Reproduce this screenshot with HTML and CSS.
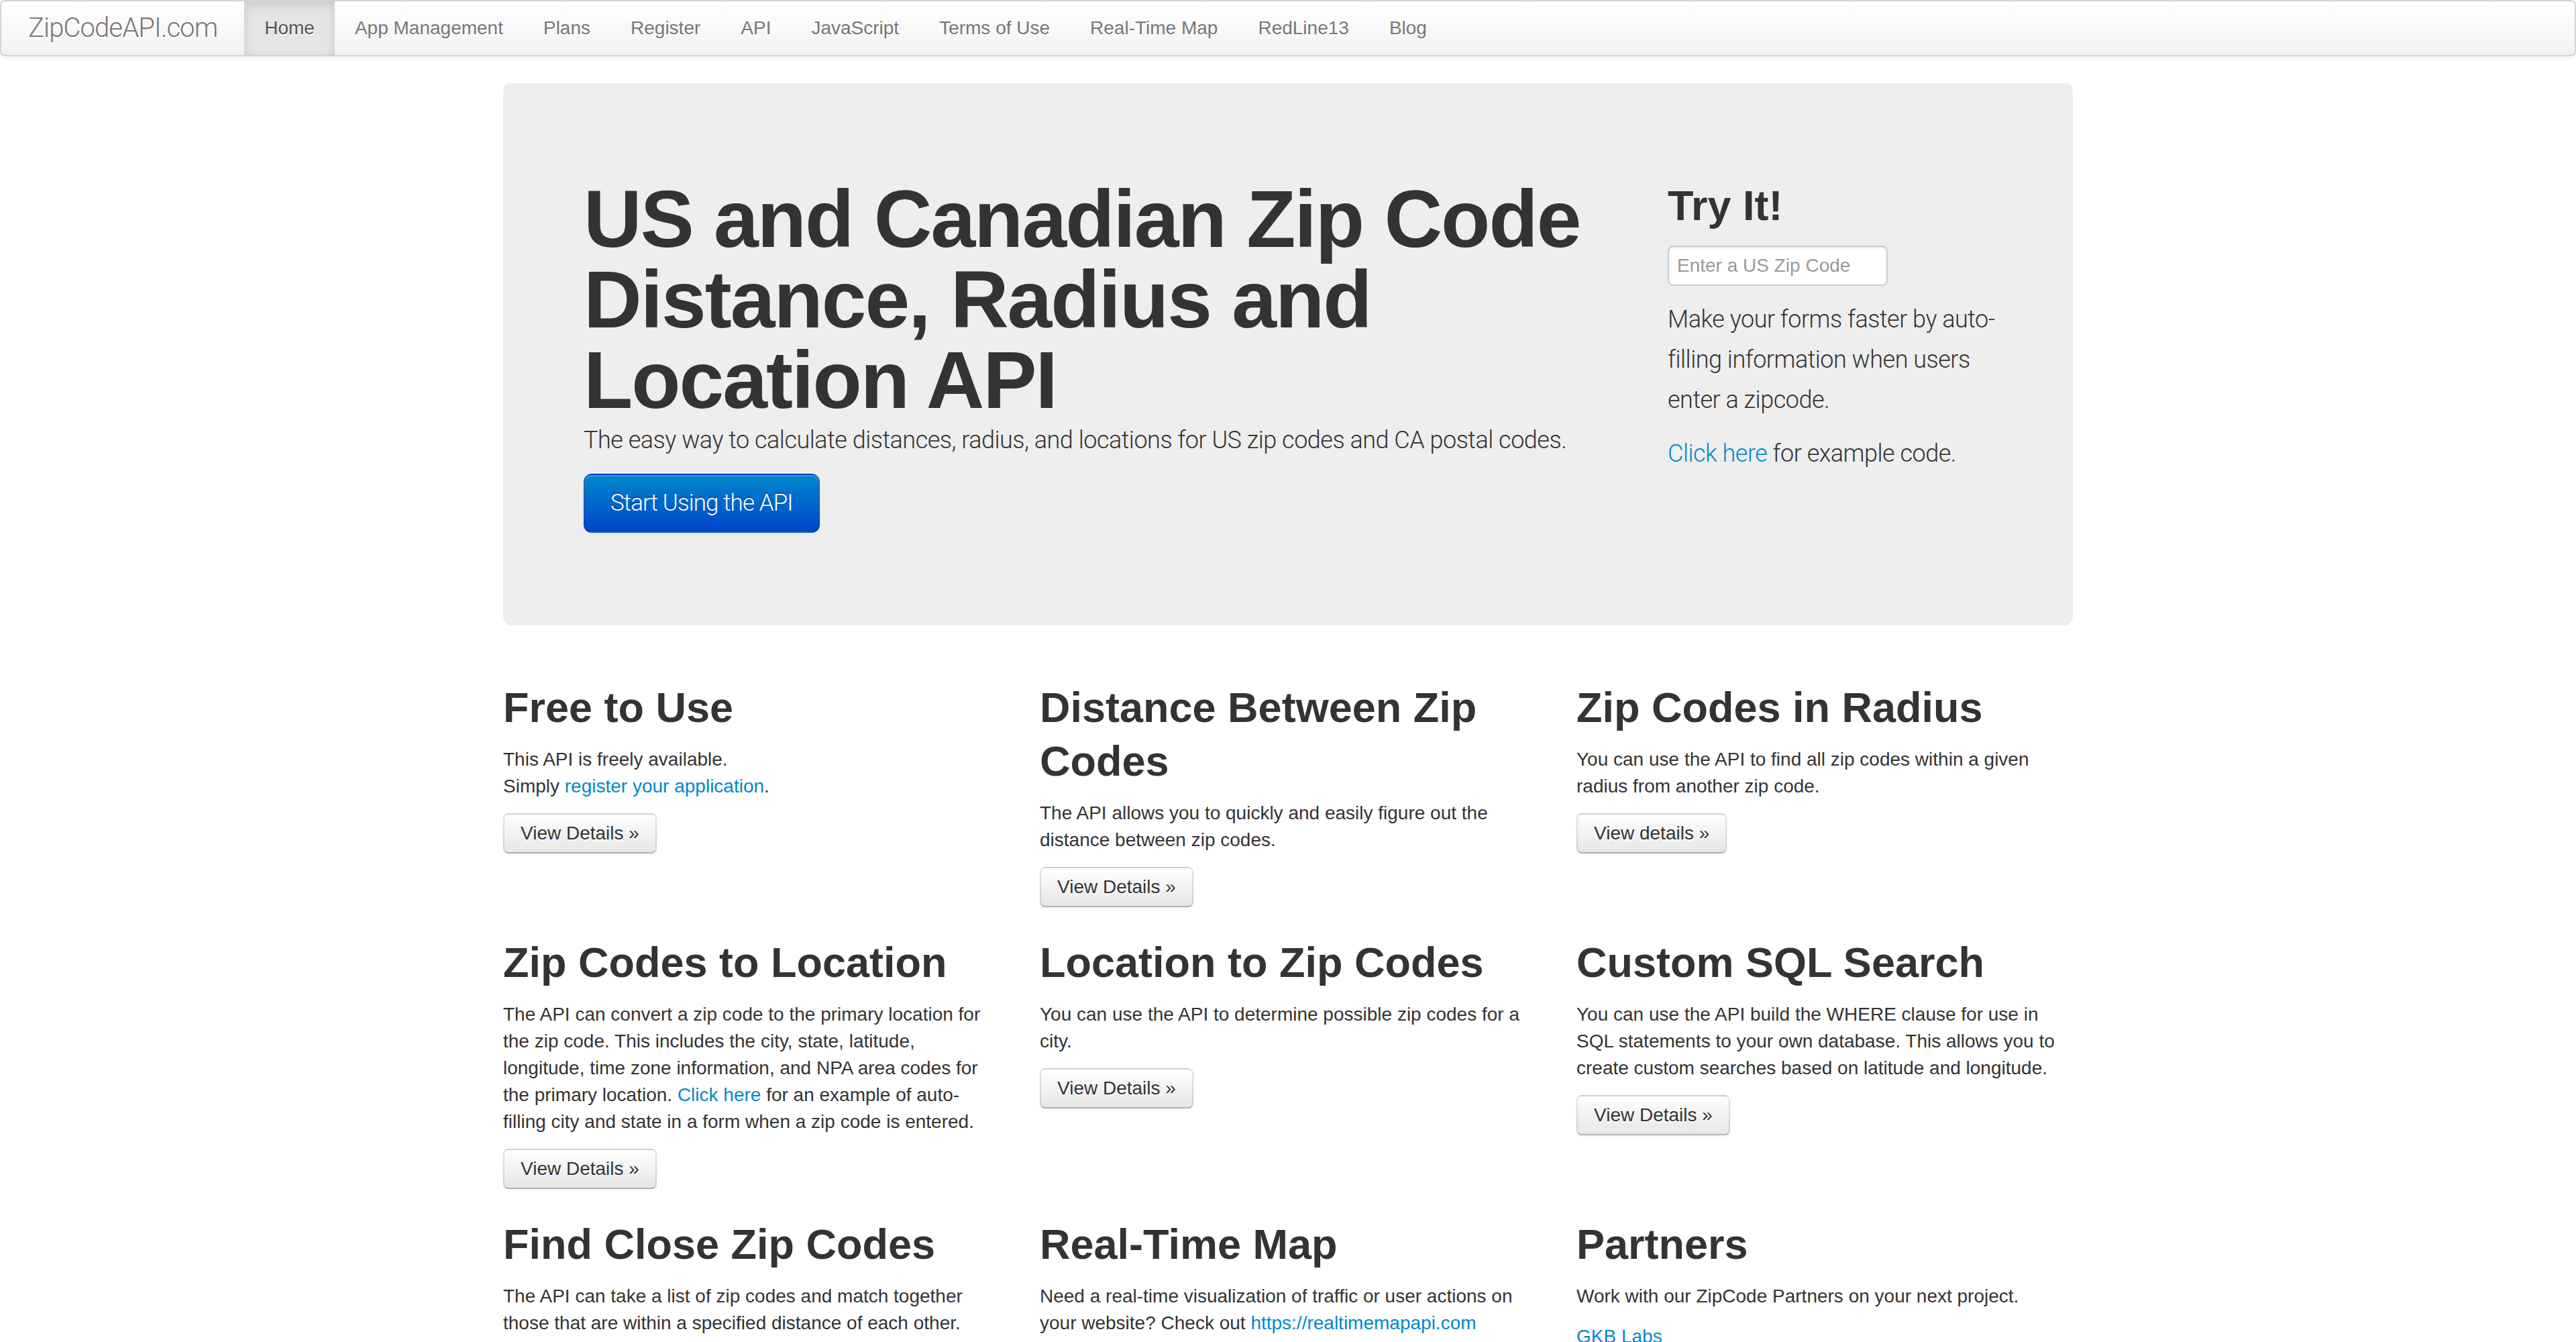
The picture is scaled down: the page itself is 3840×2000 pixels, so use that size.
FILE: index.html
```html
<!DOCTYPE html>
<html lang="en">
<head>
<meta charset="utf-8">
<title>ZipCodeAPI.com</title>
<link rel="stylesheet" href="styles.css">
</head>
<body>
<div class="navbar">
  <div class="navbar-inner">
    <a class="brand" href="#">ZipCodeAPI.com</a>
    <ul class="nav">
      <li class="active"><a href="#">Home</a></li>
      <li><a href="#">App Management</a></li>
      <li><a href="#">Plans</a></li>
      <li><a href="#">Register</a></li>
      <li><a href="#">API</a></li>
      <li><a href="#">JavaScript</a></li>
      <li><a href="#">Terms of Use</a></li>
      <li><a href="#">Real-Time Map</a></li>
      <li><a href="#">RedLine13</a></li>
      <li><a href="#">Blog</a></li>
    </ul>
  </div>
</div>

<div class="container">
  <div class="hero-unit">
    <div class="hero-main">
      <h1>US and Canadian Zip Code Distance, Radius and Location API</h1>
      <p>The easy way to calculate distances, radius, and locations for US zip codes and CA postal codes.</p>
      <p><a class="btn btn-primary btn-large" href="#">Start Using the API</a></p>
    </div>
    <div class="hero-side">
      <h2>Try It!</h2>
      <input class="zip-input" type="text" placeholder="Enter a US Zip Code">
      <p>Make your forms faster by auto-filling information when users enter a zipcode.</p>
      <p><a href="#">Click here</a> for example code.</p>
    </div>
  </div>

  <div class="row">
    <div class="span4">
      <h2>Free to Use</h2>
      <p>This API is freely available.<br>Simply <a href="#">register your application</a>.</p>
      <p><a class="btn" href="#">View Details &raquo;</a></p>
    </div>
    <div class="span4">
      <h2>Distance Between Zip Codes</h2>
      <p>The API allows you to quickly and easily figure out the distance between zip codes.</p>
      <p><a class="btn" href="#">View Details &raquo;</a></p>
    </div>
    <div class="span4">
      <h2>Zip Codes in Radius</h2>
      <p>You can use the API to find all zip codes within a given radius from another zip code.</p>
      <p><a class="btn" href="#">View details &raquo;</a></p>
    </div>
  </div>

  <div class="row">
    <div class="span4">
      <h2>Zip Codes to Location</h2>
      <p>The API can convert a zip code to the primary location for the zip code. This includes the city, state, latitude, longitude, time zone information, and NPA area codes for the primary location. <a href="#">Click here</a> for an example of auto-filling city and state in a form when a zip code is entered.</p>
      <p><a class="btn" href="#">View Details &raquo;</a></p>
    </div>
    <div class="span4">
      <h2>Location to Zip Codes</h2>
      <p>You can use the API to determine possible zip codes for a city.</p>
      <p><a class="btn" href="#">View Details &raquo;</a></p>
    </div>
    <div class="span4">
      <h2>Custom SQL Search</h2>
      <p>You can use the API build the WHERE clause for use in SQL statements to your own database. This allows you to create custom searches based on latitude and longitude.</p>
      <p><a class="btn" href="#">View Details &raquo;</a></p>
    </div>
  </div>

  <div class="row">
    <div class="span4">
      <h2>Find Close Zip Codes</h2>
      <p>The API can take a list of zip codes and match together those that are within a specified distance of each other.</p>
      <p><a class="btn" href="#">View Details &raquo;</a></p>
    </div>
    <div class="span4">
      <h2>Real-Time Map</h2>
      <p>Need a real-time visualization of traffic or user actions on your website? Check out <a href="#">https://realtimemapapi.com</a></p>
      <p><a class="btn" href="#">View Details &raquo;</a></p>
    </div>
    <div class="span4">
      <h2>Partners</h2>
      <p>Work with our ZipCode Partners on your next project.</p>
      <p><a href="#">GKB Labs</a></p>
    </div>
  </div>
</div>
</body>
</html>
```

FILE: styles.css
```css
html, body {
  margin: 0;
  padding: 0;
}

body {
  font-family: "Liberation Sans", Arial, Helvetica, sans-serif;
  font-size: 28px;
  line-height: 40px;
  color: #333;
  background: #fff;
}

a {
  color: #0088cc;
  text-decoration: none;
}

p {
  margin: 0 0 20px;
}

h1, h2 {
  font-family: "Liberation Sans", Arial, Helvetica, sans-serif;
  font-weight: bold;
  color: #333;
  letter-spacing: normal;
}

h2 {
  font-size: 63px;
  line-height: 80px;
  margin: 20px 0;
}

/* Navbar */
.navbar {
  margin-bottom: 40px;
}

.navbar-inner {
  display: flex;
  align-items: stretch;
  min-height: 80px;
  padding: 0 40px;
  background: linear-gradient(to bottom, #ffffff, #f2f2f2);
  border: 2px solid #d4d4d4;
  border-radius: 8px;
  box-shadow: 0 2px 8px rgba(0, 0, 0, 0.065);
}

.brand {
  display: block;
  padding: 20px 40px;
  margin-left: -40px;
  font-family: Roboto, "Liberation Sans", sans-serif;
  font-weight: 300;
  font-size: 40px;
  line-height: 40px;
  letter-spacing: -0.9px;
  color: #777;
  text-shadow: 0 2px 0 #fff;
}

.nav {
  display: flex;
  list-style: none;
  margin: 0;
  padding: 0;
}

.nav a {
  display: block;
  padding: 20px 30px;
  line-height: 40px;
  color: #777;
  text-shadow: 0 2px 0 #fff;
}

.nav .active a {
  background: #e5e5e5;
  color: #555;
  box-shadow: inset 0 6px 16px rgba(0, 0, 0, 0.125);
}

/* Layout */
.container {
  width: 2340px;
  margin: 0 auto;
}

.hero-unit {
  display: grid;
  grid-template-columns: 1520px 504px;
  column-gap: 96px;
  padding: 122px 100px 118px 120px;
  margin-bottom: 60px;
  background: #eeeeee;
  border-radius: 12px;
  font-family: Roboto, "Liberation Sans", sans-serif;
  font-weight: 300;
  font-size: 36px;
  line-height: 60px;
  letter-spacing: -0.5px;
  color: #333;
}

.hero-unit h1 {
  margin: 20px 0 0;
  font-size: 120px;
  line-height: 120px;
  letter-spacing: -2px;
}

.hero-side h2 {
  margin: 20px 0;
}

.zip-input {
  display: block;
  width: 300px;
  height: 40px;
  padding: 8px 12px;
  margin: 0 0 20px;
  font-family: "Liberation Sans", Arial, sans-serif;
  font-size: 28px;
  line-height: 40px;
  letter-spacing: normal;
  color: #555;
  background: #fff;
  border: 2px solid #cccccc;
  border-radius: 8px;
  box-shadow: inset 0 2px 2px rgba(0, 0, 0, 0.075);
  outline: none;
}

.zip-input::placeholder {
  color: #999;
}

/* Buttons */
.btn {
  display: inline-block;
  padding: 8px 24px;
  font-size: 28px;
  line-height: 40px;
  color: #333;
  text-align: center;
  vertical-align: middle;
  text-shadow: 0 2px 2px rgba(255, 255, 255, 0.75);
  background-color: #f5f5f5;
  background-image: linear-gradient(to bottom, #ffffff, #e6e6e6);
  border: 2px solid rgba(0, 0, 0, 0.1);
  border-bottom-color: #b3b3b3;
  border-radius: 8px;
  box-shadow: inset 0 2px 0 rgba(255, 255, 255, 0.2), 0 2px 4px rgba(0, 0, 0, 0.05);
}

.btn-primary {
  color: #fff;
  text-shadow: 0 -2px 0 rgba(0, 0, 0, 0.25);
  background-color: #006dcc;
  background-image: linear-gradient(to bottom, #0088cc, #0044cc);
  border-color: rgba(0, 0, 0, 0.1) rgba(0, 0, 0, 0.1) rgba(0, 0, 0, 0.25);
}

.btn-large {
  padding: 22px 38px;
  font-size: 35px;
  letter-spacing: -0.9px;
  border-radius: 12px;
}

/* Feature rows */
.row {
  display: grid;
  grid-template-columns: repeat(3, 740px);
  column-gap: 60px;
}

.span4 h2 {
  position: relative;
  top: 2px;
}
```
